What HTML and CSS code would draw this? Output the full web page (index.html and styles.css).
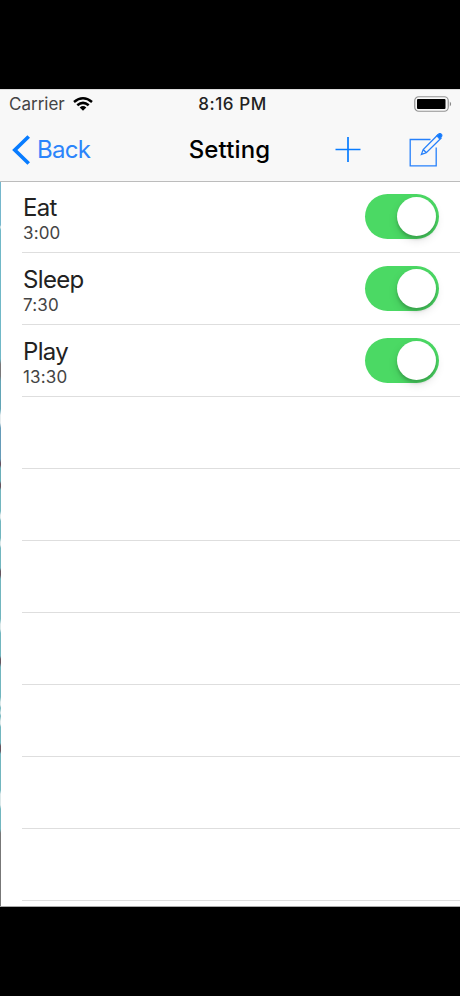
FILE: index.html
```html
<!DOCTYPE html>
<html lang="en">
<head>
<meta charset="utf-8">
<title>Setting</title>
<link rel="stylesheet" href="styles.css">
</head>
<body>
<main class="screen">
  <header class="header">
    <div class="status">
      <div class="carrier"><span class="carrier-name">Carrier</span>
        <svg class="wifi" width="20" height="14" viewBox="0 0 20 14" fill="none" stroke="#000" stroke-width="2.5"><path d="M1 5Q10-2.4 19 5M4.3 8.3Q10 3.4 15.7 8.3"/><path d="M6.7 10.4Q10 7.5 13.3 10.4L10 13.8Z" fill="#000" stroke="none"/></svg>
      </div>
      <span class="time">8:16 PM</span>
      <svg class="battery" width="38" height="16" viewBox="0 0 38 16"><rect x=".75" y=".75" width="33.5" height="14.5" rx="4" fill="none" stroke="#929292" stroke-width="1.2"/><rect x="3" y="3" width="28.5" height="10" rx="1" fill="#000"/><path d="M35.8 5.5Q38.5 8 35.8 10.5Z" fill="#888"/></svg>
    </div>
    <nav class="nav">
      <a class="back"><svg width="18" height="30" viewBox="0 0 18 30" fill="none" stroke="#087cff" stroke-width="3.7"><path d="M16.7 1.5 2.8 15l13.9 13.5"/></svg><span class="back-label">Back</span></a>
      <h1 class="title">Setting</h1>
      <div class="actions">
        <svg width="26" height="26" viewBox="0 0 26 26" stroke="#087cff" stroke-width="1.7"><path d="M13 0v25M.5 12.5h25"/></svg>
        <svg width="34" height="34" viewBox="0 0 34 34" fill="none" stroke="#2680fb" stroke-width="1.3"><path d="M21.5 6.5H1.2v26.3h26V14.5"/><path d="m12.4 21.4 1.8-4.9L28.7 2l3.3 3.2-14.7 14.6zM14.2 16.5l3.1 3.3"/><path d="m28 2.8 1.8-1.8q1.2-1 2.4.3 1.2 1.2.1 2.4l-1.7 2.1z" fill="#087cff"/></svg>
      </div>
    </nav>
  </header>
  <ul class="list">
    <li class="row"><div class="label"><div class="name">Eat</div><div class="clock">3:00</div></div><span class="switch"></span></li>
    <li class="row"><div class="label"><div class="name">Sleep</div><div class="clock">7:30</div></div><span class="switch"></span></li>
    <li class="row"><div class="label"><div class="name">Play</div><div class="clock">13:30</div></div><span class="switch"></span></li>
    <li class="row"></li>
    <li class="row"></li>
    <li class="row"></li>
    <li class="row"></li>
    <li class="row"></li>
    <li class="row"></li>
    <li class="row"></li>
  </ul>
</main>
</body>
</html>
```
FILE: styles.css
```css
* { box-sizing: border-box; }
body {
  margin: 0;
  height: 996px;
  padding: 89px 0;
  overflow: hidden;
  background: #000;
  font-family: Inter, "Liberation Sans", sans-serif;
}
.screen {
  height: 818px;
  background: #fff;
  border-bottom: 1px solid #aaa;
  overflow: hidden;
}
.header {
  height: 92px;
  background: #f8f8f8;
  border-top: 1px solid #ddd;
  box-shadow: 0 1px #bcbcbc;
  position: relative;
}
.status {
  height: 28px;
  padding: 0 8px 0 9px;
  display: grid;
  grid-template-columns: 1fr auto 1fr;
  align-items: center;
  font-size: 17px;
  line-height: 28px;
}
.carrier { display: flex; align-items: center; gap: 8px; color: #444; }
.time { margin-left: 4px; color: #222; font-weight: 500; letter-spacing: .55px; }
.battery { justify-self: end; }
.nav {
  height: 63px;
  padding: 0 17px 0 12px;
  display: grid;
  grid-template-columns: 1fr auto 1fr;
  align-items: center;
}
.back { display: flex; align-items: center; gap: 7px; color: #2b84fb; }
.back-label { font-size: 24px; letter-spacing: -.7px; }
.title { margin: 0 0 0 4px; font-size: 24px; font-weight: 500; letter-spacing: .15px; }
.actions { display: flex; align-items: center; justify-content: flex-end; gap: 48px; }
.list {
  height: 725px;
  margin: 0;
  padding: 0 0 0 22px;
  list-style: none;
  /* Sliver of the page underneath, visible along the left edge. */
  background: linear-gradient(#75b7cc 0 44px, #dce9ec 46px, #70b8c7 49px 178px, #797779 183px 195px, #62a5b6 200px 228px, #e7edef 234px 242px, #659bb8 247px 278px, #66505e 282px 284px, #6aafb9 287px 300px, #66545e 303px 306px, #72b6bf 309px 330px, #e3eced 334px 337px, #71b6bf 340px 357px, #dce8e9 361px 364px, #71b6bf 367px 387px, #66545e 390px 394px, #71b6bf 398px 438px, #dce8e9 443px 448px, #71b6bf 452px 475px, #66545e 478px 482px, #71b6bf 486px 516px, #dce8e9 521px 524px, #71b6bf 527px, #dce8e9 532px, #71b6bf 535px, #e1eaeb 540px 543px, #71b6bf 546px 562px, #66545e 565px 570px, #71b6bf 573px 609px, #dce8e9 613px 624px, #71b6bf 628px 648px, #777 652px) 0 0 / 1px 100% no-repeat;
}
.row {
  height: 72px;
  padding: 0 21px 0 1px;
  display: flex;
  align-items: center;
  justify-content: space-between;
  border-bottom: 1px solid #dedede;
}
.label { padding-top: 5px; }
.name { font-size: 24px; line-height: 28px; letter-spacing: -.65px; color: #222; }
.clock { font-size: 17px; line-height: 23px; letter-spacing: .15px; color: #444; }
.switch {
  width: 74px;
  height: 45px;
  padding: 3px;
  border-radius: 23px;
  background: #4bd964;
  display: flex;
  justify-content: flex-end;
}
.switch::after {
  content: "";
  width: 39px;
  height: 39px;
  border-radius: 50%;
  background: #fff;
  box-shadow: 0 3px 3px rgba(0,0,0,.16), 0 4px 10px rgba(0,0,0,.13);
}
```
